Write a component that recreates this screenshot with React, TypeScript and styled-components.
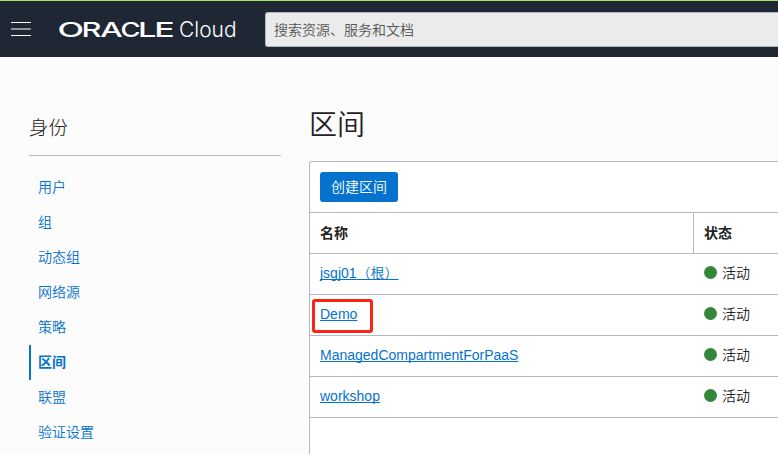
import React from "react";
import styled, { createGlobalStyle } from "styled-components";

const GlobalStyle = createGlobalStyle`
  * { box-sizing: border-box; }
  body {
    margin: 0;
    background: #fcfcfc;
    color: #222;
    font: 14px/20px "Liberation Sans", "Noto Sans CJK SC", sans-serif;
    overflow: hidden;
  }
`;

const Page = styled.div`
  height: 454px;
  overflow: hidden;
  display: flex;
  flex-direction: column;
  font-weight: 350;
`;

const Header = styled.header`
  flex: 0 0 57px;
  display: flex;
  align-items: flex-start;
  padding-left: 11px;
  background: #1e2733;
  border-top: 1px solid #a2e368;
`;

const MenuButton = styled.button`
  width: 20px;
  height: 14px;
  margin: 21px 24px 0 0;
  padding: 0;
  border: 0;
  background: none;
  svg { display: block; }
`;

const Logo = styled.svg`
  display: block;
  width: 184px;
  height: 30px;
  margin: 14px 26px 0 0;
  overflow: visible;
  fill: #fff;
  font-family: Inter, sans-serif;
`;

const SearchBox = styled.div`
  flex: 1;
  height: 35px;
  margin-top: 11px;
  padding: 0 8px;
  border: 1px solid #aeb6be;
  border-right: 0;
  border-radius: 3px 0 0 3px;
  background: #ebebeb;
  color: #555;
  line-height: 35px;
`;

const Body = styled.div`
  flex: 1;
  display: flex;
  padding-left: 29px;
  min-height: 0;
`;

const Sidebar = styled.nav`
  width: 252px;
  margin-right: 28px;
`;

const SidebarTitle = styled.h2`
  height: 99px;
  margin: 0 0 14px;
  padding-top: 56px;
  border-bottom: 1px solid #b3b6c0;
  font-size: 19.5px;
  line-height: 30px;
  font-weight: 300;
`;

const NavItem = styled.a<{ $active?: boolean }>`
  display: block;
  height: 35px;
  padding-left: ${(p) => (p.$active ? 7 : 9)}px;
  border-left: ${(p) => (p.$active ? "2px solid #0572ce" : "0")};
  color: #0572ce;
  font-weight: ${(p) => (p.$active ? 700 : 350)};
  line-height: 35px;
`;

const Main = styled.main`
  flex: 1;
  display: flex;
  flex-direction: column;
`;

const Title = styled.h1`
  height: 104px;
  margin: 0;
  padding-top: 49px;
  font-size: 28px;
  line-height: 40px;
  font-weight: 350;
`;

const Panel = styled.section`
  flex: 1;
  border: solid #b3b8c3;
  border-width: 1px 0 0 1px;
  border-top-left-radius: 3px;
  background: #fff;
`;

const Toolbar = styled.div`
  height: 51px;
  padding: 10px;
  border-bottom: 1px solid #b3b8c3;
`;

const CreateButton = styled.button`
  display: block;
  width: 78px;
  height: 30px;
  padding: 0;
  border: 0;
  border-radius: 3px;
  background: #0572ce;
  color: #fff;
  font: inherit;
  line-height: 30px;
`;

const Row = styled.div<{ $head?: boolean }>`
  display: grid;
  grid-template-columns: 384px 1fr;
  height: 41px;
  border-bottom: 1px solid #b3b8c3;
  font-weight: ${(p) => (p.$head ? 700 : 350)};
  & > div {
    height: ${(p) => (p.$head ? 40 : 38)}px;
    padding-left: 10px;
    line-height: ${(p) => (p.$head ? 40 : 38)}px;
  }
  & > div:first-child {
    border-right: ${(p) => (p.$head ? "1px solid #b3b8c3" : "0")};
  }
`;

const StatusCell = styled.div`
  display: flex;
  align-items: center;
  gap: 5px;
`;

const Dot = styled.span`
  width: 13px;
  height: 13px;
  margin: 0 0.5px 1px -0.5px;
  border-radius: 50%;
  background: #34863a;
`;

const NameLink = styled.a`
  position: relative;
  color: #0572ce;
  text-decoration: underline;
  text-decoration-skip-ink: none;
  text-underline-offset: 1px;
`;

const Highlight = styled.span`
  position: absolute;
  left: -8px;
  top: -7px;
  width: 61px;
  height: 34px;
  border: 3px solid #fb2415;
  border-radius: 3px;
`;

const navItems = ["用户", "组", "动态组", "网络源", "策略", "区间", "联盟", "验证设置"];
const compartments = ["jsgj01（根）", "Demo", "ManagedCompartmentForPaaS", "workshop"];

// Extended wordmark: each letter has its own start and width.
const wordmark = [
  { letter: "O", x: -1.6, width: 26.5 },
  { letter: "R", x: 22.6, width: 20 },
  { letter: "A", x: 41.2, width: 22.5 },
  { letter: "C", x: 61.5, width: 20 },
  { letter: "L", x: 79, width: 18.5 },
  { letter: "E", x: 95.3, width: 20.5 },
];

export default function App() {
  return (
    <Page>
      <GlobalStyle />
      <Header>
        <MenuButton aria-label="菜单">
          <svg width="20" height="14">
            <path d="M0 .5h20M0 13.5h20" stroke="#fff" />
            <path d="M0 7h20" stroke="#8e9399" strokeWidth="2" />
          </svg>
        </MenuButton>
        <Logo viewBox="-4 -2 184 30">
          {wordmark.map(({ letter, x, width }) => (
            <text key={letter} x={x} y="19.7" fontSize="20" fontWeight="500" textLength={width} lengthAdjust="spacingAndGlyphs">{letter}</text>
          ))}
          <text x="120" y="20" fontSize="21" fontWeight="300" textLength="57.5" lengthAdjust="spacingAndGlyphs">Cloud</text>
        </Logo>
        <SearchBox>搜索资源、服务和文档</SearchBox>
      </Header>
      <Body>
        <Sidebar>
          <SidebarTitle>身份</SidebarTitle>
          {navItems.map((label) => (
            <NavItem key={label} $active={label === "区间"}>{label}</NavItem>
          ))}
        </Sidebar>
        <Main>
          <Title>区间</Title>
          <Panel>
            <Toolbar>
              <CreateButton>创建区间</CreateButton>
            </Toolbar>
            <Row $head>
              <div>名称</div>
              <div>状态</div>
            </Row>
            {compartments.map((name) => (
              <Row key={name}>
                <div>
                  <NameLink>
                    {name}
                    {name === "Demo" && <Highlight />}
                  </NameLink>
                </div>
                <StatusCell>
                  <Dot />
                  活动
                </StatusCell>
              </Row>
            ))}
          </Panel>
        </Main>
      </Body>
    </Page>
  );
}
